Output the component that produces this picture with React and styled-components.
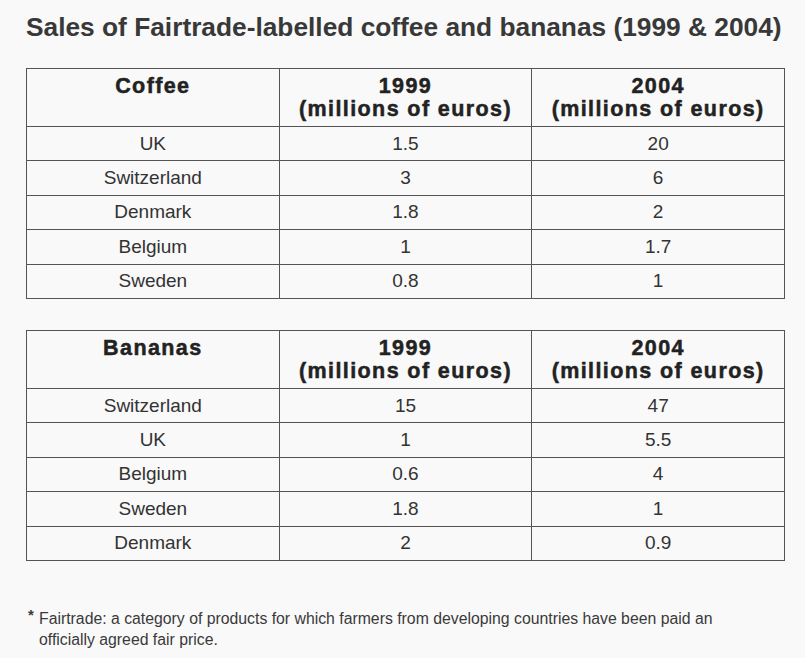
import React from "react";
import styled, { createGlobalStyle } from "styled-components";

const GlobalStyle = createGlobalStyle`
  html, body {
    margin: 0;
    padding: 0;
    background: #f9f9f9;
  }
  body {
    font-family: "Liberation Sans", Arial, sans-serif;
    color: #333;
  }
`;

const Page = styled.main`
  width: 759px;
  padding: 12px 0 0 26px;
`;

const Title = styled.h1`
  margin: 0 0 26px;
  font-size: 26.3px;
  line-height: 30px;
  font-weight: bold;
  color: #383838;
  white-space: nowrap;
`;

const Table = styled.table`
  width: 759px;
  table-layout: fixed;
  border-collapse: collapse;
  border: 1.5px solid #4a4a4a;
  margin-bottom: ${(props) => props.$gap || 0}px;
`;

const HeadCell = styled.th`
  height: 58px;
  padding: 6px 0 0;
  box-sizing: border-box;
  vertical-align: top;
  border: 1px solid #555;
  font-size: 21.5px;
  line-height: 23px;
  font-weight: bold;
  letter-spacing: 1.4px;
  -webkit-text-stroke: 0.5px #222;
  color: #222;
  text-align: center;
`;

const Cell = styled.td`
  height: 34.4px;
  padding: 0;
  box-sizing: border-box;
  border: 1px solid #555;
  font-size: 19px;
  line-height: 22px;
  color: #333;
  text-align: center;
  vertical-align: middle;
`;

const Footnote = styled.p`
  display: flex;
  margin: 47px 0 0 2px;
  font-size: 15.8px;
  line-height: 21px;
  color: #3a3a3a;
`;

const Star = styled.span`
  flex: 0 0 11px;
  font-weight: bold;
  font-size: 15px;
  line-height: 14px;
`;

const NoteText = styled.span`
  width: 710px;
`;

const coffee = [
  ["UK", "1.5", "20"],
  ["Switzerland", "3", "6"],
  ["Denmark", "1.8", "2"],
  ["Belgium", "1", "1.7"],
  ["Sweden", "0.8", "1"],
];

const bananas = [
  ["Switzerland", "15", "47"],
  ["UK", "1", "5.5"],
  ["Belgium", "0.6", "4"],
  ["Sweden", "1.8", "1"],
  ["Denmark", "2", "0.9"],
];

function SalesTable({ product, rows, gap }) {
  return (
    <Table $gap={gap}>
      <thead>
        <tr>
          <HeadCell>{product}</HeadCell>
          <HeadCell>
            1999
            <br />
            (millions of euros)
          </HeadCell>
          <HeadCell>
            2004
            <br />
            (millions of euros)
          </HeadCell>
        </tr>
      </thead>
      <tbody>
        {rows.map((row) => (
          <tr key={row[0]}>
            {row.map((value, i) => (
              <Cell key={i}>{value}</Cell>
            ))}
          </tr>
        ))}
      </tbody>
    </Table>
  );
}

export default function App() {
  return (
    <>
      <GlobalStyle />
      <Page>
        <Title>Sales of Fairtrade-labelled coffee and bananas (1999 &amp; 2004)</Title>
        <SalesTable product="Coffee" rows={coffee} gap={31} />
        <SalesTable product="Bananas" rows={bananas} />
        <Footnote>
          <Star>*</Star>
          <NoteText>
            Fairtrade: a category of products for which farmers from developing countries have been paid an
            officially agreed fair price.
          </NoteText>
        </Footnote>
      </Page>
    </>
  );
}
